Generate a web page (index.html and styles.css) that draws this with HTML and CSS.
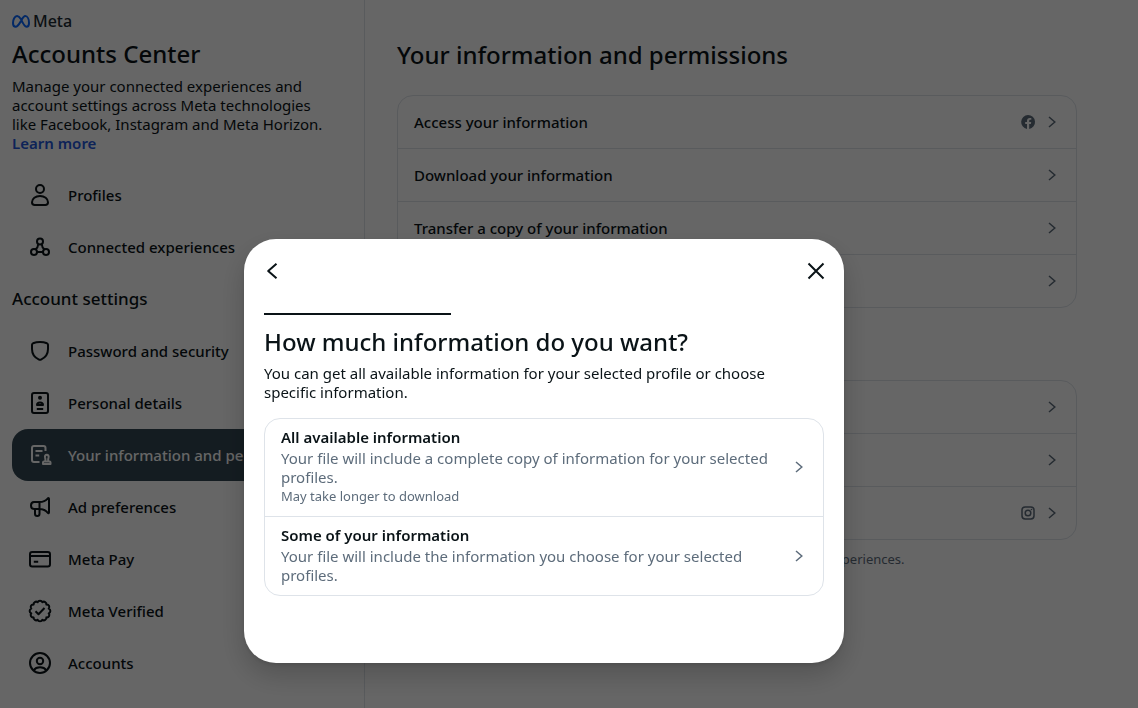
FILE: index.html
```html
<!DOCTYPE html>
<html lang="en">
<head>
<meta charset="utf-8">
<title>Accounts Center</title>
<link rel="stylesheet" href="styles.css">
</head>
<body>
<svg class="sprite" aria-hidden="true">
  <symbol id="chevron" viewBox="0 0 16 16"><path d="M5 3l5.800 5L5 13"/></symbol>
</svg>
<div class="page">
  <aside class="sidebar">
    <div class="brand">
      <svg class="brand-mark" viewBox="0 0 18 13" aria-hidden="true"><path d="M9 4.200C7.600 2 6.500 1.100 5.100 1.100 2.700 1.100 1 4.300 1 7.900c0 2.300 1 3.900 2.700 3.900C5.700 11.800 7 9.300 9 6c1.600-2.900 2.500-4.900 4.200-4.900 2.300 0 3.800 3.200 3.800 6.800 0 2.400-.9 3.900-2.500 3.900-2 0-3.200-2.400-5.500-7.600z"/></svg>
      <span>Meta</span>
    </div>
    <h1 class="title">Accounts Center</h1>
    <p class="intro">Manage your connected experiences and account settings across Meta technologies like Facebook, Instagram and Meta Horizon. <a class="learn" href="#">Learn more</a></p>
    <nav>
      <a class="nav-item" href="#"><svg class="icon" viewBox="0 0 24 24"><circle cx="12" cy="6" r="4"/><path d="M4 19.200C4 15.500 7.500 13 12 13s8 2.500 8 6.200c0 1.900-.9 2.800-2.700 2.800H6.700C4.900 22 4 21.100 4 19.200z"/></svg>Profiles</a>
      <a class="nav-item" href="#"><svg class="icon" viewBox="0 0 24 24"><circle cx="12" cy="6.500" r="3"/><circle cx="6" cy="17" r="3"/><circle cx="18" cy="17" r="3"/><path d="M9 17h6M10.200 9.200c-.1 2.300-1 3.900-2.700 5.200M13.800 9.200c.1 2.300 1 3.900 2.700 5.200"/></svg>Connected experiences</a>
      <h2 class="nav-heading">Account settings</h2>
      <a class="nav-item" href="#"><svg class="icon" viewBox="0 0 24 24"><path d="M12 3c2.700 0 5 .5 7 1.300.7.300 1 .8 1 1.500V10c0 4.800-2.500 8.500-7 10.600-.7.300-1.300.3-2 0C6.500 18.500 4 14.800 4 10V5.800c0-.7.3-1.200 1-1.500C7 3.500 9.300 3 12 3z"/></svg>Password and security</a>
      <a class="nav-item" href="#"><svg class="icon" viewBox="0 0 24 24"><rect x="4" y="2" width="16" height="20" rx="2"/><circle class="solid" cx="12" cy="6.800" r="2"/><path d="M9 14c0-1.700 1.200-2.500 3-2.500s3 .8 3 2.500zM8.800 18h6.400"/></svg>Personal details</a>
      <a class="nav-item selected" href="#"><svg class="icon" viewBox="0 0 24 24"><path d="M11.500 19H6c-1.300 0-2-.7-2-2V5c0-1.300.7-2 2-2h9.500c1.300 0 2 .7 2 2v3M7.500 8h7M7.500 12.500h3.700M15 21v-1.500c0-.7.4-1 1-1h5.500c.6 0 1 .3 1 1V21zM17.300 18.300c.3-1.600.2-2.600-.2-3.700-.5-1.500.3-2.800 1.700-2.800s2.200 1.300 1.700 2.800c-.4 1.100-.5 2.100-.2 3.700"/></svg>Your information and permissions</a>
      <a class="nav-item" href="#"><svg class="icon" viewBox="0 0 24 24"><path d="M6 7h5.500c3.500 0 6.500-1.500 8.400-3.700.4-.4 1.100-.2 1.100.5v13.800c0 .7-.7.9-1.100.4-1.900-2.500-4.900-4-8.400-4H6.200C4.200 14 3 12.500 3 10.500S4.200 7 6 7zM11.500 7v11.700c0 1.400-.8 2.300-2.200 2.300S7 20.100 7 18.700V14"/></svg>Ad preferences</a>
      <a class="nav-item" href="#"><svg class="icon" viewBox="0 0 24 24"><rect x="2" y="5" width="20" height="14.500" rx="2.200"/><path d="M2 9h20M5.800 14.700h4.400"/></svg>Meta Pay</a>
      <a class="nav-item" href="#"><svg class="icon" viewBox="0 0 24 24"><path d="M20.700 9.670a2.460 2.460 0 0 1 0 4.660 2.460 2.460 0 0 1-2.330 4.040 2.460 2.460 0 0 1-4.040 2.330 2.460 2.460 0 0 1-4.660 0 2.460 2.460 0 0 1-4.040-2.330 2.460 2.460 0 0 1-2.330-4.040 2.460 2.460 0 0 1 0-4.660 2.460 2.460 0 0 1 2.330-4.040 2.460 2.460 0 0 1 4.040-2.330 2.460 2.460 0 0 1 4.660 0 2.460 2.460 0 0 1 4.040 2.330 2.460 2.460 0 0 1 2.330 4.040zM7.500 12.300l3 3 6-6.300"/></svg>Meta Verified</a>
      <a class="nav-item" href="#"><svg class="icon" viewBox="0 0 24 24"><circle cx="12" cy="12" r="10"/><circle cx="12" cy="10" r="3.200"/><path d="M5.500 19.300c1.500-2 3.700-3 6.500-3s5 1 6.500 3"/></svg>Accounts</a>
    </nav>
  </aside>

  <main class="main">
    <h2 class="title">Your information and permissions</h2>
    <div class="card">
      <a class="row" href="#"><span class="row-label">Access your information</span>
        <svg class="badge" viewBox="0 0 16 16"><path class="fill" fill-rule="evenodd" d="M8 1a7 7 0 0 1 1.200 13.900V10h1.700l.3-2H9.200V6.800c0-.6.3-1.100 1.200-1.100h.9V4c-.5-.1-1-.1-1.500-.1-1.800 0-2.800 1-2.800 2.900V8H5.200v2H7v4.900A7 7 0 0 1 8 1z"/></svg>
        <svg class="chevron"><use href="#chevron"/></svg></a>
      <a class="row" href="#"><span class="row-label">Download your information</span><svg class="chevron"><use href="#chevron"/></svg></a>
      <a class="row" href="#"><span class="row-label">Transfer a copy of your information</span><svg class="chevron"><use href="#chevron"/></svg></a>
      <a class="row" href="#"><span class="row-label"></span><svg class="chevron"><use href="#chevron"/></svg></a>
    </div>
    <div class="card second">
      <a class="row" href="#"><span class="row-label"></span><svg class="chevron"><use href="#chevron"/></svg></a>
      <a class="row" href="#"><span class="row-label"></span><svg class="chevron"><use href="#chevron"/></svg></a>
      <a class="row" href="#"><span class="row-label"></span>
        <svg class="badge" viewBox="0 0 16 16"><rect x="2" y="2" width="12" height="12" rx="3.200"/><circle cx="8" cy="8" r="2.800"/><circle class="fill" cx="11.500" cy="4.500" r=".8"/></svg>
        <svg class="chevron"><use href="#chevron"/></svg></a>
    </div>
    <p class="note">Control what information Meta technologies can use to influence your experiences.</p>
  </main>
</div>

<div class="overlay">
  <section class="dialog" role="dialog" aria-modal="true" aria-labelledby="dialog-title">
    <header class="dialog-bar">
      <button class="icon-button" type="button" aria-label="Back"><svg class="icon" viewBox="0 0 24 24"><path d="M16.500 4.700 8.200 12l8.300 7.300"/></svg></button>
      <button class="icon-button" type="button" aria-label="Close"><svg class="icon" viewBox="0 0 24 24"><path d="m4.500 4.500 15 15M19.500 4.500l-15 15"/></svg></button>
    </header>
    <div class="progress"></div>
    <h2 class="title" id="dialog-title">How much information do you want?</h2>
    <p class="lead">You can get all available information for your selected profile or choose specific information.</p>
    <div class="options">
      <button class="option" type="button">
        <span class="option-text"><span class="option-name">All available information</span><span class="option-desc">Your file will include a complete copy of information for your selected profiles.</span><span class="option-hint">May take longer to download</span></span>
        <svg class="chevron"><use href="#chevron"/></svg>
      </button>
      <button class="option" type="button">
        <span class="option-text"><span class="option-name">Some of your information</span><span class="option-desc">Your file will include the information you choose for your selected profiles.</span></span>
        <svg class="chevron"><use href="#chevron"/></svg>
      </button>
    </div>
  </section>
</div>
</body>
</html>
```

FILE: styles.css
```css
* { box-sizing: border-box; }

body {
  margin: 0;
  overflow: hidden;
  background: #fff;
  color: #0a1317;
  font: 15px/19px "Noto Sans", sans-serif;
}

h1, h2, p { margin: 0; }
a { color: inherit; text-decoration: none; }
button { border: 0; background: none; padding: 0; color: inherit; font: inherit; text-align: left; cursor: pointer; }
svg { fill: none; stroke: currentColor; flex: none; }
.sprite { position: absolute; width: 0; height: 0; }
.fill { fill: currentColor; stroke: none; }
.solid { fill: currentColor; stroke: none; }

.page { display: flex; min-height: 100vh; }

.title { font-size: 24px; line-height: 28px; font-weight: 500; }

.sidebar {
  flex: none;
  width: 365px;
  padding: 13px 12px 18px;
  border-right: 1px solid #dee3e9;
}
.brand { display: flex; align-items: center; gap: 3px; height: 16px; color: #1c2b33; font-size: 16px; font-weight: 500; }
.brand-mark { width: 18px; height: 13px; stroke: #0866ff; stroke-width: 2; }
.sidebar .title { margin-top: 11px; }
.intro { margin-top: 9px; padding-right: 16px; }
.learn { display: block; color: #2358dc; font-weight: 600; }

nav { margin-top: 16px; }
.nav-item {
  display: flex;
  align-items: center;
  gap: 16px;
  height: 52px;
  padding: 0 16px;
  border-radius: 16px;
  font-weight: 500;
  white-space: nowrap;
}
.nav-item.selected { background: #344854; color: #fff; }
.nav-heading { padding: 16px 0; font-size: 17px; line-height: 20px; font-weight: 500; }
.icon { width: 24px; height: 24px; stroke-width: 2; stroke-linejoin: round; }

.main { flex: 1; padding: 41px 61px 0 32px; }
.card { margin-top: 26px; border: 1px solid #dee3e9; border-radius: 16px; }
.card.second { margin-top: 72px; }
.row { display: flex; align-items: center; gap: 8px; height: 52px; padding: 0 16px; font-weight: 500; }
.row + .row { height: 53px; border-top: 1px solid #dee3e9; }
.row-label { flex: 1; }
.chevron, .badge { width: 16px; height: 16px; color: #5d6c7b; stroke-width: 1.5; }
.note { margin-top: 10px; color: #5d6c7b; font-size: 13px; }

.overlay {
  position: fixed;
  inset: 0;
  display: flex;
  justify-content: center;
  align-items: flex-end;
  padding: 0 50px 45px 0;
  background: rgba(0, 0, 0, 0.6);
}
.dialog {
  width: 600px;
  padding: 20px 20px 67px;
  border-radius: 32px;
  background: #fff;
  box-shadow: 0 12px 28px rgba(0, 0, 0, 0.2), 0 2px 4px rgba(0, 0, 0, 0.1);
}
.dialog-bar { display: flex; justify-content: space-between; margin: 0 -4px; }
.icon-button { display: flex; }
.progress { width: 33.400%; height: 2px; margin: 30px 0 13px; background: #0a1317; }
.lead { margin-top: 8px; padding-right: 16px; }
.options { margin-top: 16px; border: 1px solid #dee3e9; border-radius: 16px; }
.option { display: flex; align-items: center; gap: 8px; width: 100%; padding: 9px 16px 10px; }
.option + .option { border-top: 1px solid #dee3e9; }
.option-text { flex: 1; display: flex; flex-direction: column; }
.option-name { font-weight: 600; }
.option-desc { margin-top: 2px; color: #5d6c7b; }
.option-hint { color: #5d6c7b; font-size: 13px; }
```
